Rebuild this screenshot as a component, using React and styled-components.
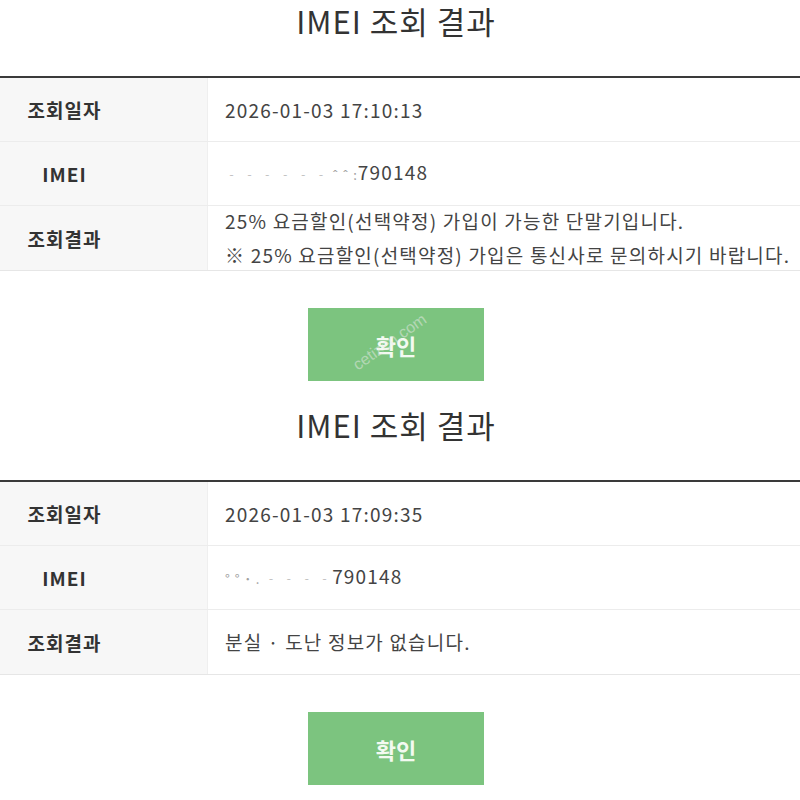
import React from 'react';
import styled, { createGlobalStyle } from 'styled-components';

const Global = createGlobalStyle`
  html, body {
    margin: 0;
    padding: 0;
    background: #fff;
    overflow: hidden;
  }
  body {
    font-family: "Noto Sans CJK KR", "Noto Sans", sans-serif;
    color: #333;
  }
`

const Page = styled.div`
  width: 800px;
`

const Section = styled.div`
  display: flex;
  flex-direction: column;
  align-items: center;
  padding-bottom: 23px;
`

const Title = styled.h2`
  margin: 0 8px 0 0;
  height: 42px;
  line-height: 42px;
  font-size: 31px;
  font-weight: 400;
  color: #333;
  letter-spacing: 1px;
`

const Table = styled.div`
  margin-top: 34px;
  width: 100%;
  border-top: 2px solid #3a3a3a;
  border-bottom: 1px solid #e6e6e6;
`

const Row = styled.div`
  display: flex;
  height: ${p => p.h || 63}px;
  & + & {
    border-top: 1px solid #ececec;
  }
`

const Label = styled.div`
  width: 208px;
  flex-shrink: 0;
  box-sizing: border-box;
  padding-right: 78px;
  display: flex;
  align-items: center;
  justify-content: center;
  background: #f7f7f7;
  border-right: 1px solid #efefef;
  font-size: 19px;
  font-weight: 700;
  letter-spacing: 1px;
  color: #333;
`

const Value = styled.div`
  flex: 1;
  display: flex;
  flex-direction: column;
  justify-content: center;
  padding-left: 17px;
  font-size: 19px;
  letter-spacing: 1.2px;
  line-height: 34px;
  color: #444;
  white-space: nowrap;
`

const Masked = styled.span`
  display: inline-block;
  min-width: ${p => p.w}px;
  color: #a0a0a0;
  font-size: 13px;
  letter-spacing: 1px;
  vertical-align: middle;
`

const Confirm = styled.button`
  position: relative;
  margin: 37px 8px 0 0;
  width: 176px;
  height: 73px;
  border: none;
  background: #7cc47f;
  color: #f3faf1;
  font-family: "Noto Sans CJK KR", sans-serif;
  font-size: 22px;
  font-weight: 700;
  overflow: visible;
`

const Watermark = styled.span`
  position: absolute;
  left: 52px;
  top: 48px;
  transform: rotate(-35deg);
  transform-origin: left bottom;
  font-family: "Liberation Sans", sans-serif;
  font-size: 16px;
  font-weight: 400;
  line-height: 18px;
  color: rgba(235, 235, 235, 0.5);
  pointer-events: none;
`

function Result({ date, masked, maskWidth, children, watermark }) {
  return (
    <Section>
      <Title>IMEI 조회 결과</Title>
      <Table>
        <Row>
          <Label>조회일자</Label>
          <Value>{date}</Value>
        </Row>
        <Row>
          <Label>IMEI</Label>
          <Value>
            <span>
              <Masked w={maskWidth}>{masked}</Masked>790148
            </span>
          </Value>
        </Row>
        <Row h={64}>
          <Label>조회결과</Label>
          <Value>{children}</Value>
        </Row>
      </Table>
      <Confirm>
        확인
        {watermark && <Watermark>cetizen.com</Watermark>}
      </Confirm>
    </Section>
  )
}

export default function App() {
  return (
    <Page>
      <Global />
      <Result date="2026-01-03 17:10:13" masked="‐ ‐ ‐ ‐ ‐ ‐ ˆ ˆ :" maskWidth={100} watermark>
        <div>25% 요금할인(선택약정) 가입이 가능한 단말기입니다.</div>
        <div>※ 25% 요금할인(선택약정) 가입은 통신사로 문의하시기 바랍니다.</div>
      </Result>
      <Result date="2026-01-03 17:09:35" masked="° ° ˙ . ‐ ‐ ‐ ‐" maskWidth={102}>
        <div>분실 · 도난 정보가 없습니다.</div>
      </Result>
    </Page>
  )
}
